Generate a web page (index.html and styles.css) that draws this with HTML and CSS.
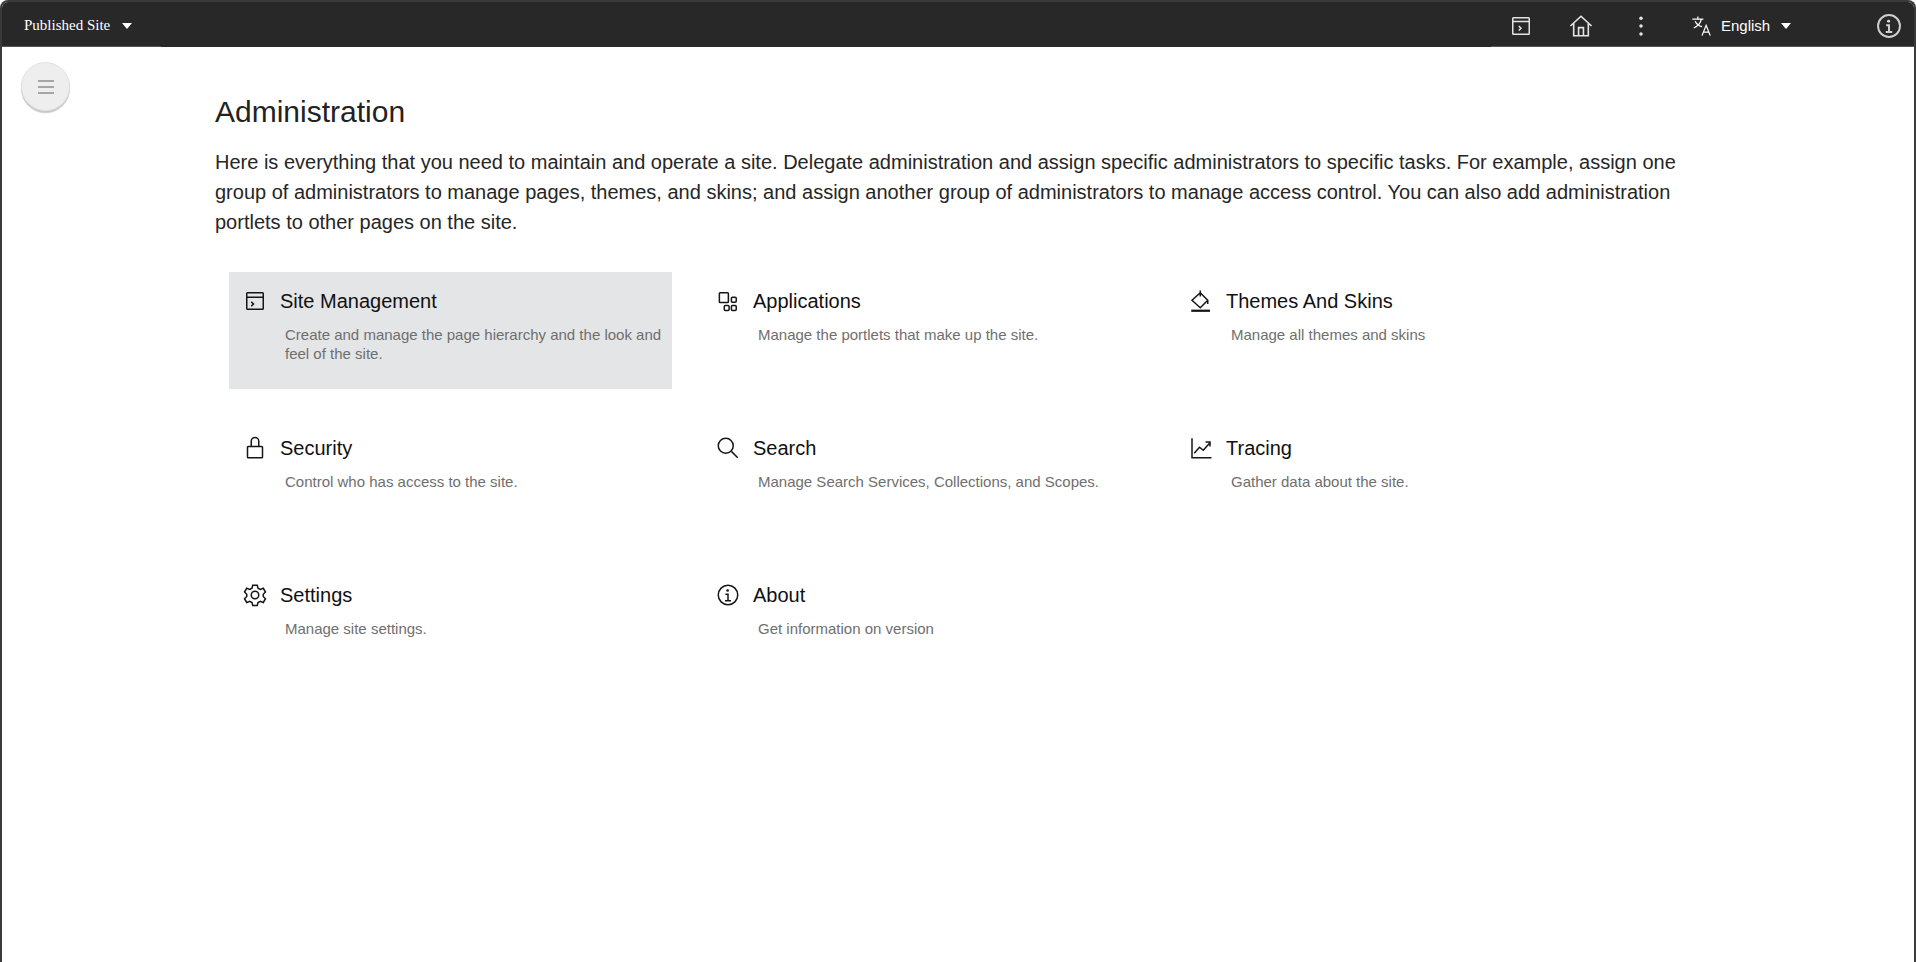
FILE: index.html
```html
<!DOCTYPE html>
<html lang="en">

<head>
  <meta charset="UTF-8">
  <title>Administration</title>
  <link rel="stylesheet" href="styles.css">
</head>

<body>
  <div class="frame">
    <header class="topbar">
      <div class="site-menu">
        <span class="site-name">Published Site</span>
        <span class="caret"></span>
      </div>
      <div class="tools">
        <svg class="tool tool-page" viewBox="0 0 32 32"><rect x="5" y="5" width="22" height="22" rx="1"/><path d="M5 10h22M13 16l3 3-3 3"/></svg>
        <svg class="tool tool-home" viewBox="0 0 32 32"><path d="M3 16 16 4l13 12M7 13v15h18V13M13 28V18h6v10"/></svg>
        <svg class="tool tool-more" viewBox="0 0 32 32"><circle class="dot" cx="16" cy="7" r="2"/><circle class="dot" cx="16" cy="16" r="2"/><circle class="dot" cx="16" cy="25" r="2"/></svg>
        <div class="lang">
          <svg class="tool tool-lang" viewBox="0 0 32 32"><path d="M2 6h16M10 2v4M15 6c-1 6-5 10-11 13M6 9c2 4 6 7 10 8M16 30l6-15 6 15M18 25h8"/></svg>
          <span class="lang-name">English</span>
          <span class="caret"></span>
        </div>
        <svg class="tool tool-info" viewBox="0 0 32 32"><circle cx="16" cy="16" r="13.500"/><path d="M12.500 15h3.500v8M12 23.500h8"/><circle class="dot" cx="15.500" cy="10" r="1.800"/></svg>
      </div>
    </header>

    <button class="side-toggle" type="button">
      <span class="bar"></span>
      <span class="bar"></span>
      <span class="bar"></span>
    </button>

    <main class="content">
      <h1>Administration</h1>
      <p class="intro">Here is everything that you need to maintain and operate a site. Delegate administration and assign specific administrators to specific tasks. For example, assign one group of administrators to manage pages, themes, and skins; and assign another group of administrators to manage access control. You can also add administration portlets to other pages on the site.</p>

      <div class="tiles">
        <a class="tile tile-active">
          <div class="tile-head">
            <svg class="icon" viewBox="0 0 32 32"><rect x="5" y="5" width="22" height="22" rx="1"/><path d="M5 11h22M11 17l3 3-3 3"/></svg>
            <span class="tile-title">Site Management</span>
          </div>
          <p class="tile-desc">Create and manage the page hierarchy and the look and feel of the site.</p>
        </a>
        <a class="tile">
          <div class="tile-head">
            <svg class="icon" viewBox="0 0 32 32"><rect x="4.500" y="5" width="12" height="13" rx="1"/><rect x="20.500" y="11" width="6.500" height="6.500" rx="1.500"/><rect x="11" y="22" width="6.500" height="6.500" rx="1.500"/><rect x="20.500" y="22" width="6.500" height="6.500" rx="1.500"/></svg>
            <span class="tile-title">Applications</span>
          </div>
          <p class="tile-desc">Manage the portlets that make up the site.</p>
        </a>
        <a class="tile">
          <div class="tile-head">
            <svg class="icon" viewBox="0 0 32 32"><path d="M15 2v8M15 5l10 10-10 10L4 15zM25 15v5"/><path class="thick" d="M3 29h25"/></svg>
            <span class="tile-title">Themes And Skins</span>
          </div>
          <p class="tile-desc">Manage all themes and skins</p>
        </a>
        <a class="tile">
          <div class="tile-head">
            <svg class="icon" viewBox="0 0 32 32"><rect x="6" y="14" width="20" height="15" rx="1"/><path d="M11 14V7a5 5 0 0 1 10 0v7"/></svg>
            <span class="tile-title">Security</span>
          </div>
          <p class="tile-desc">Control who has access to the site.</p>
        </a>
        <a class="tile">
          <div class="tile-head">
            <svg class="icon" viewBox="0 0 32 32"><circle cx="13" cy="13" r="10"/><path d="M20.500 20.500 29 29"/></svg>
            <span class="tile-title">Search</span>
          </div>
          <p class="tile-desc">Manage Search Services, Collections, and Scopes.</p>
        </a>
        <a class="tile">
          <div class="tile-head">
            <svg class="icon" viewBox="0 0 32 32"><path d="M4 3v26h26M7 23l7-8 5 4 9-10M22 8h6v6"/></svg>
            <span class="tile-title">Tracing</span>
          </div>
          <p class="tile-desc">Gather data about the site.</p>
        </a>
        <a class="tile">
          <div class="tile-head">
            <svg class="icon" viewBox="0 0 32 32"><circle cx="16" cy="16" r="5"/><path d="M13 3h6l1 4 3 1.500 4-1.500 3 5-3 3v3l3 3-3 5-4-1.500-3 1.500-1 4h-6l-1-4-3-1.500-4 1.500-3-5 3-3v-3l-3-3 3-5 4 1.500 3-1.500z"/></svg>
            <span class="tile-title">Settings</span>
          </div>
          <p class="tile-desc">Manage site settings.</p>
        </a>
        <a class="tile">
          <div class="tile-head">
            <svg class="icon" viewBox="0 0 32 32"><circle cx="16" cy="16" r="13"/><path d="M12.500 15h3.500v8M12 23.500h8"/><circle class="icon-dot" cx="15.500" cy="10" r="1.800"/></svg>
            <span class="tile-title">About</span>
          </div>
          <p class="tile-desc">Get information on version</p>
        </a>
      </div>
    </main>
  </div>
</body>

</html>
```

FILE: styles.css
```css
* {
  padding: 0;
  margin: 0;
  box-sizing: border-box;
}

html,
body {
  height: 100%;
  background: #fff;
  overflow: hidden;
}

.frame {
  position: relative;
  height: 962px;
  border: solid #3a3a3a;
  border-width: 2px 2px 0;
  border-radius: 8px 8px 0 0;
  font-family: "Liberation Sans", Arial, sans-serif;
  overflow: hidden;
}

.topbar {
  display: flex;
  justify-content: space-between;
  height: 45px;
  background: #282828;
  color: #fff;
}

.site-menu {
  display: flex;
  align-items: center;
  width: 159px;
  padding: 3px 0 0 22px;
  border-bottom: 1px solid #555;
}

.site-name {
  font-family: "Liberation Serif", "Times New Roman", serif;
  font-size: 15px;
  margin-right: 12px;
}

.caret {
  width: 0;
  height: 0;
  border: solid transparent;
  border-width: 6px 5px 0;
  border-top-color: #fff;
}

.tools {
  display: flex;
  align-items: center;
  width: 423px;
  padding-top: 3px;
  border-bottom: 1px solid #555;
}

.tool {
  width: 24px;
  height: 24px;
  fill: none;
  stroke: #e4e4e4;
  stroke-width: 2;
}

.tool-page {
  margin-left: 18px;
}

.tool-home {
  width: 26px;
  height: 26px;
  margin-left: 35px;
}

.tool-more {
  width: 28px;
  height: 28px;
  margin-left: 33px;
}

.dot {
  fill: #e4e4e4;
  stroke: none;
}

.lang {
  display: flex;
  align-items: center;
  margin-left: 36px;
}

.tool-lang {
  width: 22px;
  height: 22px;
  stroke: #fff;
  stroke-width: 1.800;
}

.lang-name {
  font-size: 15px;
  margin: 0 11px 0 8px;
}

.tool-info {
  width: 26px;
  height: 26px;
  margin-left: 85px;
  stroke: #cfcfcf;
  stroke-width: 2.400;
}

/* sits over the page, not part of the flow */
.side-toggle {
  position: absolute;
  top: 60px;
  left: 19px;
  display: flex;
  flex-direction: column;
  align-items: center;
  justify-content: center;
  gap: 4px;
  width: 49px;
  height: 49px;
  border: 1px solid #e2e2e2;
  border-radius: 50%;
  background: #eee;
  box-shadow: 0 2px 1px #c8c8c8;
}

.bar {
  width: 16px;
  height: 2px;
  background: #a6a6a6;
}

.content {
  width: 1702px;
  padding: 47px 0 0 213px;
}

h1 {
  font-size: 30px;
  font-weight: 400;
  line-height: 36px;
  color: #222;
  margin-bottom: 17px;
}

.intro {
  font-size: 20px;
  line-height: 30px;
  color: #262626;
  margin-bottom: 35px;
}

.tiles {
  display: grid;
  grid-template-columns: repeat(3, 443px);
  grid-auto-rows: 117px;
  gap: 30px;
  margin-left: 14px;
}

.tile {
  display: block;
  padding: 15px 10px 0 14px;
}

.tile-active {
  background: #e4e5e7;
}

.tile-head {
  display: flex;
  align-items: center;
  height: 28px;
  gap: 13px;
}

.icon {
  flex: none;
  width: 24px;
  height: 24px;
  fill: none;
  stroke: #161616;
  stroke-width: 2;
}

.icon-dot {
  fill: #161616;
  stroke: none;
}

.thick {
  stroke-width: 3;
}

.tile-title {
  font-size: 20px;
  color: #111;
}

.tile-desc {
  margin: 10px 0 0 42px;
  font-size: 15px;
  line-height: 19px;
  color: #6f6f6f;
}
```
